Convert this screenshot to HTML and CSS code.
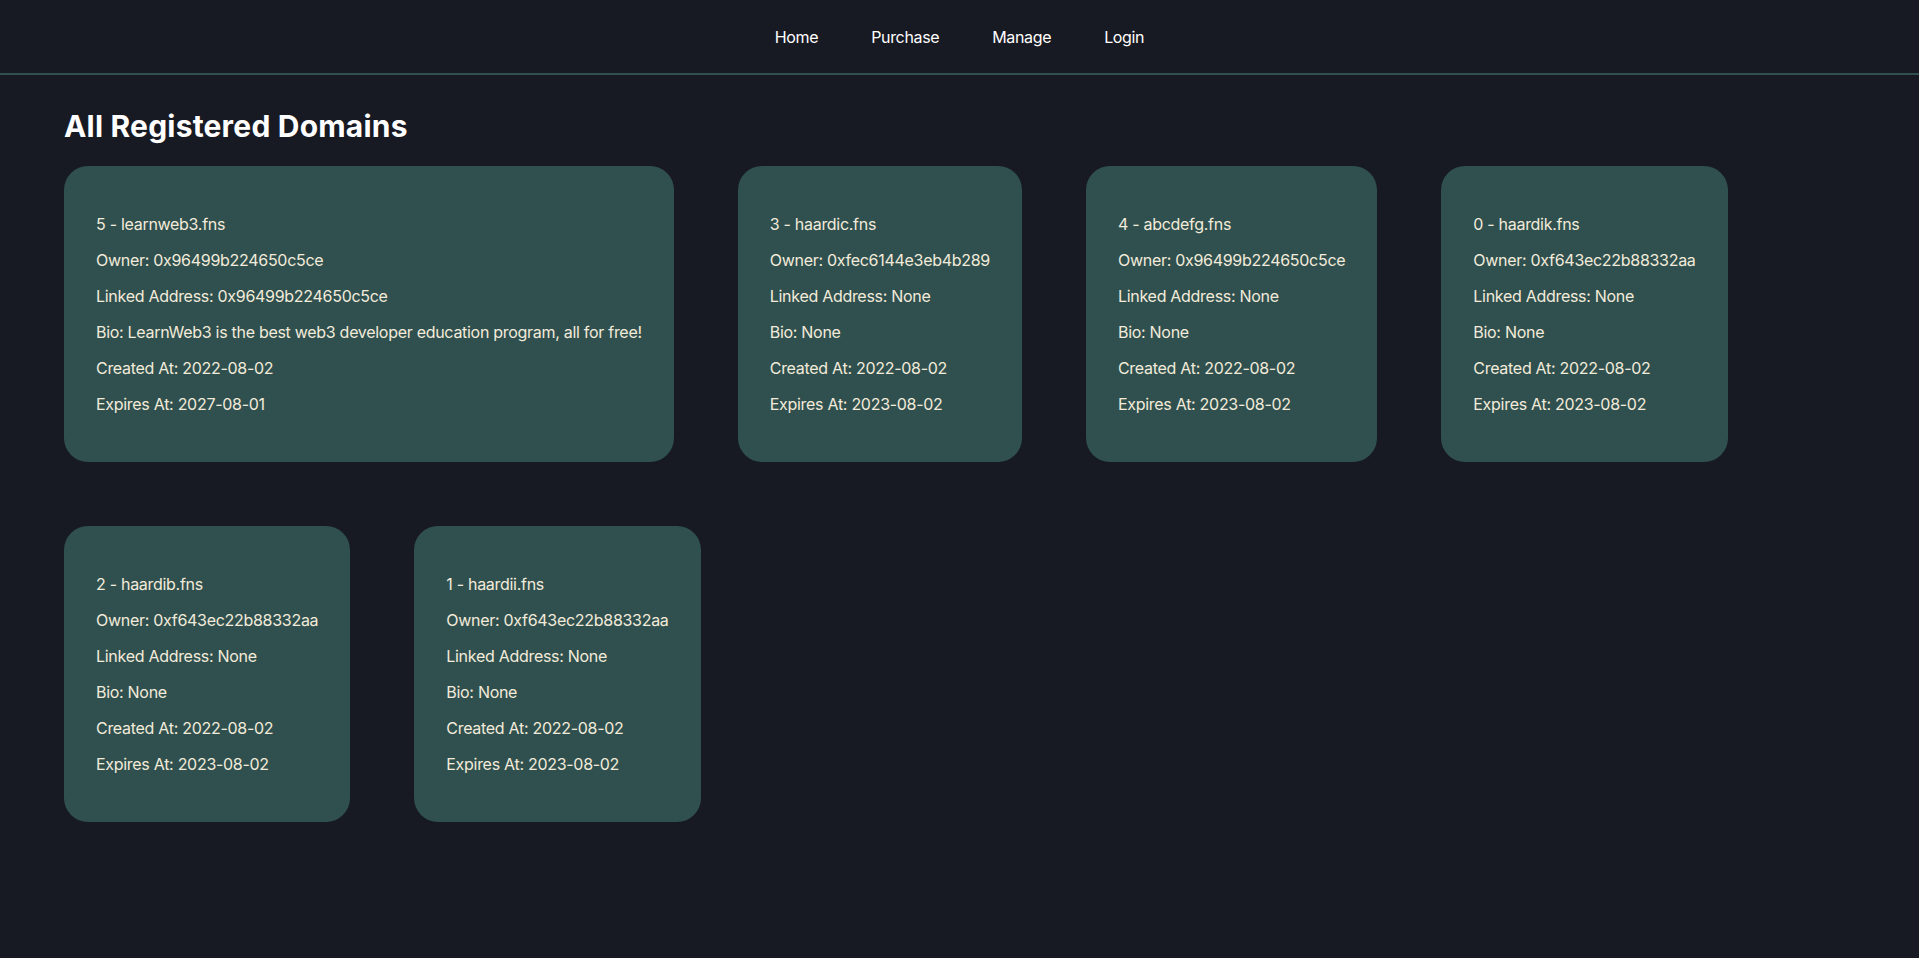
FILE: index.html
```html
<!DOCTYPE html>
<html lang="en">
<head>
<meta charset="utf-8">
<title>All Registered Domains</title>
<link rel="stylesheet" href="styles.css">
</head>
<body>
<header class="topbar">
  <nav class="nav">
    <a class="nav-link" href="#">Home</a>
    <a class="nav-link" href="#">Purchase</a>
    <a class="nav-link" href="#">Manage</a>
    <a class="nav-link" href="#">Login</a>
  </nav>
</header>
<main class="page">
  <h1 class="title">All Registered Domains</h1>
  <div class="cards">
    <div class="card">
      <p>5 - learnweb3.fns</p>
      <p>Owner: 0x96499b224650c5ce</p>
      <p>Linked Address: 0x96499b224650c5ce</p>
      <p>Bio: LearnWeb3 is the best web3 developer education program, all for free!</p>
      <p>Created At: 2022-08-02</p>
      <p>Expires At: 2027-08-01</p>
    </div>
    <div class="card">
      <p>3 - haardic.fns</p>
      <p>Owner: 0xfec6144e3eb4b289</p>
      <p>Linked Address: None</p>
      <p>Bio: None</p>
      <p>Created At: 2022-08-02</p>
      <p>Expires At: 2023-08-02</p>
    </div>
    <div class="card">
      <p>4 - abcdefg.fns</p>
      <p>Owner: 0x96499b224650c5ce</p>
      <p>Linked Address: None</p>
      <p>Bio: None</p>
      <p>Created At: 2022-08-02</p>
      <p>Expires At: 2023-08-02</p>
    </div>
    <div class="card">
      <p>0 - haardik.fns</p>
      <p>Owner: 0xf643ec22b88332aa</p>
      <p>Linked Address: None</p>
      <p>Bio: None</p>
      <p>Created At: 2022-08-02</p>
      <p>Expires At: 2023-08-02</p>
    </div>
    <div class="card">
      <p>2 - haardib.fns</p>
      <p>Owner: 0xf643ec22b88332aa</p>
      <p>Linked Address: None</p>
      <p>Bio: None</p>
      <p>Created At: 2022-08-02</p>
      <p>Expires At: 2023-08-02</p>
    </div>
    <div class="card">
      <p>1 - haardii.fns</p>
      <p>Owner: 0xf643ec22b88332aa</p>
      <p>Linked Address: None</p>
      <p>Bio: None</p>
      <p>Created At: 2022-08-02</p>
      <p>Expires At: 2023-08-02</p>
    </div>
  </div>
</main>
</body>
</html>
```

FILE: styles.css
```css
* {
  box-sizing: border-box;
}

html, body {
  margin: 0;
  padding: 0;
}

body {
  background: #181a23;
  color: #ffffff;
  font-family: Inter, "Noto Sans", sans-serif;
  min-height: 958px;
}

.topbar {
  height: 75px;
  border-bottom: 2px solid #2f504f;
  display: flex;
  align-items: center;
  justify-content: center;
}

.nav {
  display: flex;
  gap: 53px;
  align-items: center;
}

.nav-link {
  color: #ffffff;
  text-decoration: none;
  font-size: 16px;
  font-weight: 400;
  letter-spacing: -0.35px;
  line-height: 20px;
}

.page {
  padding: 0 64px;
}

.title {
  margin: 33px 0 22px 0;
  font-size: 30px;
  line-height: 36px;
  font-weight: 700;
  letter-spacing: 0.2px;
  color: #ffffff;
}

.cards {
  display: flex;
  flex-wrap: wrap;
  gap: 64px;
  align-items: flex-start;
}

.card {
  background: #2f504f;
  border-radius: 24px;
  padding: 32px;
  color: #f3ebda;
}

.card p {
  margin: 16px 0;
  font-size: 16px;
  line-height: 20px;
  letter-spacing: -0.29px;
  white-space: nowrap;
}
```
